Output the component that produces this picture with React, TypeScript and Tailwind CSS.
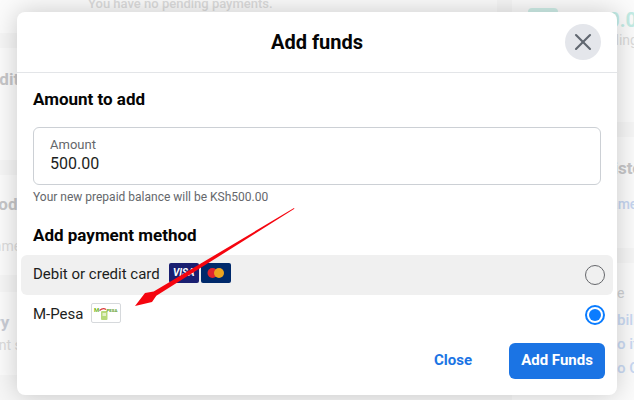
import { X } from "lucide-react";

function Visa() {
  return (
    <div className="w-[30px] h-5 rounded-[2px] bg-[#1a1f71] flex items-center justify-center">
      <span className="text-white text-[10px] font-bold italic leading-none">VISA</span>
    </div>
  );
}

function Mastercard() {
  return (
    <div className="w-[30px] h-5 rounded-[2px] bg-[#00296b] flex items-center justify-center">
      <svg width="20" height="12" viewBox="0 0 20 12">
        <circle cx="6.5" cy="6" r="5" fill="#e1232e" />
        <circle cx="13" cy="6" r="5" fill="#eda31f" />
      </svg>
    </div>
  );
}

function MpesaLogo() {
  return (
    <div className="w-[30px] h-5 rounded-[2px] bg-white border border-[#d6d9dc] flex items-center justify-center">
      <svg width="28" height="18" viewBox="0 0 28 18">
        <rect x="9" y="7" width="6.5" height="9" rx="1" fill="#b8d97a" />
        <rect x="10.5" y="9" width="3.5" height="3" fill="#e4f0c8" />
        <path d="M7.5 6.5 Q11 3.5 14 5.5" stroke="#d93a3a" strokeWidth="1.2" fill="none" />
        <text x="2" y="8" fontSize="6" fontWeight="700" fill="#76b82a" fontFamily="Roboto, sans-serif">M</text>
        <text x="14.5" y="7.5" fontSize="4.4" fontWeight="700" fill="#5f9e2a" fontFamily="Roboto, sans-serif">PESA</text>
      </svg>
    </div>
  );
}

function Radio({ checked }: { checked: boolean }) {
  if (checked) {
    return (
      <div className="w-5 h-5 rounded-full border-2 border-[#0a7cff] flex items-center justify-center">
        <div className="w-3 h-3 rounded-full bg-[#0a7cff]" />
      </div>
    );
  }
  return <div className="w-5 h-5 rounded-full border border-[#65676b]" />;
}

function BackgroundPage() {
  return (
    <div className="flex h-[400px] gap-[15px] bg-[#f6f6f6]">
      <div className="w-[497px] shrink-0 flex flex-col gap-[15px]">
        <div className="h-[33px] bg-[#fbfbfb] pl-[88px] overflow-hidden">
          <p className="-mt-[4px] text-[13px] leading-4 font-medium text-[#dcdcdc]">You have no pending payments.</p>
        </div>
        <div className="h-[112px] bg-[#fbfbfb] overflow-hidden pt-[21px]">
          <p className="-ml-[27px] text-[17px] leading-5 font-bold text-[#c6c6c8]">Credit</p>
        </div>
        <div className="h-[100px] bg-[#fbfbfb] overflow-hidden pt-[19px]">
          <p className="-ml-[41px] text-[17px] leading-5 font-bold text-[#c6c6c8]">Methods</p>
          <p className="-ml-[30px] mt-[22px] text-sm leading-5 text-[#dcdcdc]">Rename</p>
        </div>
        <div className="h-[83px] mt-[2px] bg-[#fbfbfb] overflow-hidden pt-[20px]">
          <p className="-ml-[46px] text-[17px] leading-5 font-bold text-[#c9ccd4]">History</p>
          <p className="-ml-[32px] mt-[3px] text-sm leading-5 text-[#dcdcdc]">Recent s</p>
        </div>
      </div>

      <div className="flex-1 min-w-0 flex flex-col gap-[15px] overflow-hidden">
        <div className="h-[122px] shrink-0 bg-[#fbfbfb] flex gap-[14px] pl-4 pt-2">
          <div className="w-[30px] h-6 rounded-sm bg-[#cfeee8] shrink-0" />
          <div className="whitespace-nowrap">
            <p className="text-xl leading-6 font-bold text-[#c3ece5]">KSh0.00</p>
            <p className="-ml-[3px] mt-[-2px] text-sm leading-5 text-[#dcdcdc]">Your billing</p>
          </div>
        </div>
        <div className="h-[111px] shrink-0 bg-[#fbfbfb] pl-[92px] pt-[21px] whitespace-nowrap">
          <p className="text-[17px] leading-5 font-bold text-[#c6c6c8]">history</p>
          <p className="-ml-[18px] mt-[16px] text-sm leading-5 font-medium text-[#c5d5f0]">Rename</p>
        </div>
        <div className="flex-1 bg-[#fbfbfb] pl-[105px] pt-[20px] whitespace-nowrap text-[15px] font-medium text-[#c9d9f3]">
          <p className="text-sm leading-5 font-normal text-[#cfd1d4]">e</p>
          <p className="mt-[5px] leading-[24px]">bill</p>
          <p className="leading-[24px]">o it</p>
          <p className="leading-[24px]">o C</p>
        </div>
      </div>
    </div>
  );
}

export default function App() {
  return (
    <div className="relative w-[634px] h-[400px] overflow-hidden font-['Roboto',sans-serif]">
      <BackgroundPage />

      {/* dialog */}
      <div className="absolute left-[17px] top-3 w-[600px] h-[383px] bg-white rounded-lg shadow-[0_0_26px_rgba(0,0,0,0.2)] flex flex-col">
        <header className="relative h-[61px] shrink-0 flex items-center justify-center border-b border-[#e3e5e8]">
          <h1 className="text-xl font-bold text-[#050505] leading-none">Add funds</h1>
          <button className="absolute right-4 top-3 w-9 h-9 rounded-full bg-[#e4e6eb] flex items-center justify-center text-[#606770]">
            <X size={28} strokeWidth={1.8} />
          </button>
        </header>

        <div className="flex-1 flex flex-col px-4 pt-4">
          <h2 className="text-[17px] font-bold text-[#050505] leading-5">Amount to add</h2>
          <div className="mt-[18px] h-[58px] border border-[#ccd0d5] rounded-md px-4 pt-[9px] flex flex-col">
            <span className="text-[13px] text-[#65676b] leading-4">Amount</span>
            <span className="text-base text-[#1c1e21] leading-5 mt-[1px]">500.00</span>
          </div>
          <p className="mt-[4px] text-xs text-[#65676b] leading-4">Your new prepaid balance will be KSh500.00</p>
          <h2 className="mt-5 text-[17px] font-bold text-[#050505] leading-5">Add payment method</h2>

          <div className="-mx-3 mt-[10px] flex flex-col">
            <div className="h-10 rounded-md bg-[#f0f0f0] pl-3 pr-2 flex items-center justify-between">
              <div className="flex items-center mb-1">
                <span className="pt-[2px] text-[15px] text-[#1c1e21]">Debit or credit card</span>
                <div className="ml-[9px] flex gap-[2px]">
                  <Visa />
                  <Mastercard />
                </div>
              </div>
              <Radio checked={false} />
            </div>
            <div className="h-10 pl-3 pr-2 flex items-center justify-between">
              <div className="flex items-center mb-1">
                <span className="pt-[2px] text-[15px] text-[#1c1e21]">M-Pesa</span>
                <div className="ml-2"><MpesaLogo /></div>
              </div>
              <Radio checked />
            </div>
          </div>

          <div className="mt-[8px] flex items-center justify-end gap-[17px] -mr-[4px]">
            <button className="h-9 px-5 pb-[2px] text-[15px] font-bold text-[#1b74e4]">Close</button>
            <button className="h-9 w-24 rounded-md bg-[#1b74e4] pb-[2px] text-[15px] font-bold text-white">Add Funds</button>
          </div>
        </div>
      </div>

      {/* annotation arrow */}
      <svg className="absolute left-0 top-0 pointer-events-none" width="634" height="400" viewBox="0 0 634 400">
        <path d="M294 208 L294.4 208.8 L156.3 295.8 L152 302 L135 306 L145 293 L153.7 291.6 Z" fill="#f5050f" />
      </svg>
    </div>
  );
}
